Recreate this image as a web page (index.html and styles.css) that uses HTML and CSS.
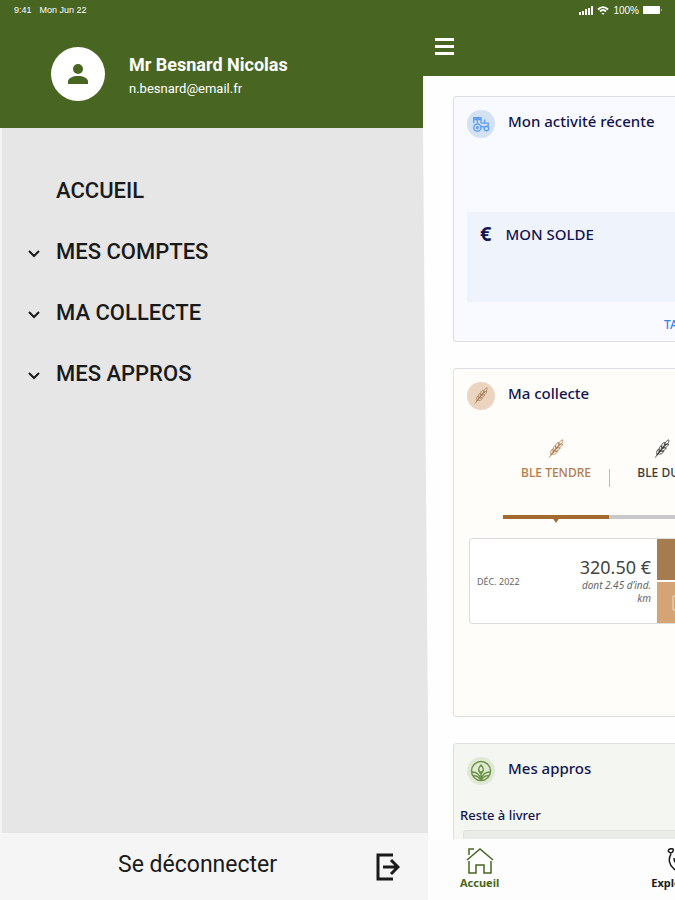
FILE: index.html
```html
<!DOCTYPE html>
<html lang="fr">
  <head>
    <meta charset="UTF-8" />
    <meta name="viewport" content="width=device-width, initial-scale=1.0" />
    <title>Accueil</title>
    <link rel="stylesheet" href="styles.css">
  </head>
  <body>
    <!-- Shared wheat ear icon -->
    <svg class="sprite" aria-hidden="true">
      <symbol id="wheat" viewBox="0 0 20 24">
        <g fill="none" stroke="currentColor" stroke-width="1" stroke-linecap="round" stroke-linejoin="round">
          <path d="M2 22L15 6" />
          <path d="M4 19c-1-4 0-6 2-7 1 3 0 5-2 7zM7 15c-1-4 0-6 2-7 1 3 0 5-2 7zM10 11c-1-4 0-6 3-7 1 3-1 5-3 7z" />
          <path d="M5 18c4 1 6-1 7-3-3-1-5 1-7 3zM8 14c4 1 6-1 7-3-3-1-5 1-7 3zM11 10c4 1 6-1 7-4-3 0-5 2-7 4z" />
          <path d="M14 7c-1-2 1-5 4-6 1 3-1 5-4 6z" />
        </g>
      </symbol>
    </svg>

    <div class="app">
      <div class="status-bar">
        <span>9:41</span>
        <span>Mon Jun 22</span>
        <div class="status-icons">
          <svg width="14" height="9" viewBox="0 0 14 9" fill="#fff">
            <path d="M0 6h2v3H0zM3 5h2v4H3zM6 3h2v6H6zM9 2h2v7H9zM12 0h2v9h-2z" />
          </svg>
          <svg width="12" height="9" viewBox="0 0 12 9" fill="none" stroke="#fff" stroke-width="2">
            <path d="M1 3.5c3-3 7-3 10 0M3 5.5c2-2 4-2 6 0" />
            <path d="M4.500 7L6 9l1.500-2z" fill="#fff" stroke="none" />
          </svg>
          <span>100%</span>
          <svg width="20" height="8" viewBox="0 0 20 8" fill="#fff">
            <rect width="17" height="8" rx="1" />
            <rect x="18" y="3" width="1" height="2" opacity="0.5" />
          </svg>
        </div>
      </div>

      <div class="layout">
        <aside class="drawer">
          <div class="profile">
            <div class="avatar">
              <svg width="20" height="20" viewBox="0 0 20 20" fill="#466622">
                <circle cx="10" cy="5" r="5" />
                <path d="M0 20v-2.500C0 14 5 12 10 12s10 2 10 5.500V20z" />
              </svg>
            </div>
            <div class="profile-text">
              <div class="profile-name">Mr Besnard Nicolas</div>
              <div class="profile-email">n.besnard@email.fr</div>
            </div>
          </div>

          <nav class="menu">
            <a href="#" class="menu-item">ACCUEIL</a>
            <a href="#" class="menu-item">
              <svg class="chevron" viewBox="0 0 12 8"><path d="M1 1l5 5 5-5" /></svg>
              MES COMPTES
            </a>
            <a href="#" class="menu-item">
              <svg class="chevron" viewBox="0 0 12 8"><path d="M1 1l5 5 5-5" /></svg>
              MA COLLECTE
            </a>
            <a href="#" class="menu-item">
              <svg class="chevron" viewBox="0 0 12 8"><path d="M1 1l5 5 5-5" /></svg>
              MES APPROS
            </a>
          </nav>

          <button class="logout">
            Se déconnecter
            <svg width="24" height="28" viewBox="0 0 24 28" fill="none" stroke="#1a1a1a" stroke-width="3">
              <path d="M17 2H2v24h15" />
              <path d="M7 14h15M15 7l7 7-7 7" />
            </svg>
          </button>
        </aside>

        <main class="main">
          <div class="topbar">
            <button class="burger" aria-label="Menu">
              <span></span>
              <span></span>
              <span></span>
            </button>
          </div>

          <div class="content">
            <section class="card activity">
              <div class="card-header">
                <div class="card-icon">
                  <svg width="18" height="18" viewBox="0 0 20 20" fill="none" stroke="#5b9cf5" stroke-width="1.500">
                    <circle cx="6" cy="14" r="4" />
                    <circle cx="6" cy="14" r="1" />
                    <circle cx="16" cy="15" r="2.500" />
                    <path d="M2 9V3h8v6M2 5h8M6 3v6M10 9h8v4M10 13h3M14 9V5" />
                  </svg>
                </div>
                <h2>Mon activité récente</h2>
              </div>
              <div class="balance">
                <span class="euro">€</span>
                <span>MON SOLDE</span>
              </div>
              <a href="#" class="card-link">TABLEAU DE BORD</a>
            </section>

            <section class="card harvest">
              <div class="card-header">
                <div class="card-icon">
                  <svg width="16" height="18"><use href="#wheat" /></svg>
                </div>
                <h2>Ma collecte</h2>
              </div>
              <div class="tabs">
                <button class="tab active">
                  <svg width="18" height="20"><use href="#wheat" /></svg>
                  BLE TENDRE
                </button>
                <button class="tab">
                  <svg width="18" height="20"><use href="#wheat" /></svg>
                  BLE DUR
                </button>
              </div>
              <div class="price-row">
                <span class="price-date">DÉC. 2022</span>
                <div class="price">
                  <div class="price-value">320.50 €</div>
                  <div class="price-note">dont 2.45 d’ind.<br />km</div>
                </div>
                <div class="price-actions">
                  <div></div>
                  <div>
                    <svg width="16" height="18" viewBox="0 0 16 18" fill="none" stroke="#f3dcc3" stroke-width="1"><path d="M1 2h14v14H1zM4 6h8M4 10h8" /></svg>
                  </div>
                </div>
              </div>
            </section>

            <section class="card supplies">
              <div class="card-header">
                <div class="card-icon">
                  <svg width="22" height="22" viewBox="0 0 22 22" fill="none" stroke="#6f9346" stroke-width="1.500">
                    <circle cx="11" cy="11" r="9.500" />
                    <path d="M11 20V11M11 14c-3-3-3-6 0-9 3 3 3 6 0 9zM11 20c-1-5-4-8-9-8M11 20c1-5 4-8 9-8M3 16c3-1 5 0 8 4M19 16c-3-1-5 0-8 4" />
                  </svg>
                </div>
                <h2>Mes appros</h2>
              </div>
              <h3>Reste à livrer</h3>
              <div class="delivery"></div>
            </section>
          </div>

          <nav class="bottom-nav">
            <a href="#" class="active">
              <svg width="28" height="26" viewBox="0 0 28 26" fill="none" stroke="currentColor" stroke-width="1.500">
                <path d="M1 12L14 1l13 11M3 7V1h5M3 13v12h7v-8h8v8h7V13" />
              </svg>
              Accueil
            </a>
            <a href="#">
              <svg width="28" height="26" viewBox="0 0 28 26" fill="none" stroke="currentColor" stroke-width="1.500">
                <path d="M13 1C10 0 7 2 9 4s5 0 4-3zM11 6c-3 5-2 11 3 15 5 3 8 1 10-4M14 10c0 4 2 6 5 7" />
              </svg>
              Explorer
            </a>
          </nav>
        </main>
      </div>
    </div>
  </body>
</html>
```
FILE: styles.css
```css
* {
  box-sizing: border-box;
}

body {
  margin: 0;
  font-family: Roboto, Arial, sans-serif;
  background-color: #fefefe;
  color: #1a1a1a;
}

a {
  color: inherit;
  text-decoration: none;
}

button {
  border: none;
  padding: 0;
  background: none;
  font-family: inherit;
  color: inherit;
  cursor: pointer;
}

h2,
h3 {
  margin: 0;
}

.sprite {
  display: none;
}

.app {
  display: flex;
  flex-direction: column;
  height: 100vh;
  overflow: hidden;
}

/* Status bar */
.status-bar {
  display: flex;
  align-items: center;
  gap: 8px;
  height: 20px;
  padding: 0 12px 0 14px;
  background-color: #486622;
  color: #fff;
  font-family: "Liberation Sans", Arial, sans-serif;
  font-size: 9px;
}

.status-icons {
  display: flex;
  align-items: center;
  gap: 4px;
  margin-left: auto;
  font-size: 10px;
}

.layout {
  display: grid;
  grid-template-columns: minmax(0, 428fr) minmax(0, 247fr);
  flex: 1;
  min-height: 0;
}

/* Drawer, its right edge leans outwards below the top bar */
.drawer {
  display: flex;
  flex-direction: column;
  background-color: #e6e6e6;
  clip-path: polygon(0 0, 100% 0, 100% 56px, calc(100% - 5px) 56px, calc(100% - 5px) 108px, 100% 80%, 100% 100%, 0 100%);
}

.profile {
  display: flex;
  align-items: center;
  gap: 24px;
  height: 108px;
  padding: 0 51px;
  background-color: #486622;
  color: #fff;
}

.avatar {
  display: flex;
  align-items: center;
  justify-content: center;
  width: 54px;
  height: 54px;
  border-radius: 50%;
  background-color: #fff;
}

.profile-text {
  padding-top: 6px;
}

.profile-name {
  font-size: 18px;
  font-weight: 700;
  line-height: 24px;
}

.profile-email {
  font-size: 13px;
  line-height: 24px;
}

.menu {
  display: flex;
  flex: 1;
  flex-direction: column;
  padding: 32px 26px;
  border-left: 2px solid #f4f4f4;
}

.menu-item {
  position: relative;
  padding-left: 28px;
  font-size: 22px;
  font-weight: 500;
  line-height: 61px;
}

.chevron {
  position: absolute;
  top: 29px;
  left: 0;
  width: 12px;
  height: 8px;
  fill: none;
  stroke: #1a1a1a;
  stroke-width: 2;
}

.logout {
  display: flex;
  align-items: center;
  justify-content: space-between;
  height: 67px;
  padding: 0 28px 4px 118px;
  background-color: #f5f5f5;
  font-size: 23px;
}

.logout svg {
  margin-top: 4px;
}

/* Main */
.main {
  display: flex;
  flex-direction: column;
  min-height: 0;
  font-family: "Noto Sans", sans-serif;
}

.topbar {
  height: 56px;
  padding: 16px 7px;
  background-color: #486622;
}

.burger {
  display: flex;
  flex-direction: column;
  gap: 4px;
  width: 19px;
  padding: 2px 0;
}

.burger span {
  width: 100%;
  height: 3px;
  background-color: #fff;
}

.content {
  display: flex;
  flex: 1;
  flex-direction: column;
  gap: 26px;
  min-height: 0;
  padding: 20px 0 0 25px;
  overflow: hidden;
}

.card {
  flex-shrink: 0;
  width: 400px;
  padding: 12px 13px;
  border: 1px solid #dcdee0;
  border-radius: 3px;
}

.card-header {
  display: flex;
  gap: 13px;
}

.card-header h2 {
  color: #14144f;
  font-size: 15px;
  font-weight: 500;
  line-height: 24px;
}

.card-icon {
  display: flex;
  align-items: center;
  justify-content: center;
  width: 28px;
  height: 28px;
  margin-top: 1px;
  border-radius: 50%;
}

.activity {
  height: 246px;
  background-color: #f8faff;
}

.activity .card-icon {
  background-color: #d2e2f3;
}

.balance {
  display: flex;
  gap: 14px;
  height: 90px;
  margin-top: 74px;
  padding: 9px 13px;
  background-color: #eff3fc;
  color: #14144f;
  font-size: 15px;
  font-weight: 500;
  line-height: 26px;
}

.euro {
  font-size: 20px;
  font-weight: 700;
}

.card-link {
  display: block;
  padding: 11px 0 0 197px;
  color: #3b82e6;
  font-size: 12px;
  font-weight: 500;
  line-height: 24px;
}

.harvest {
  height: 349px;
  background-color: #fffdf9;
}

.harvest .card-icon {
  background-color: #ecd5c0;
  color: #a9805b;
}

.tabs {
  display: flex;
  margin: 29px 0 0 36px;
}

.tab {
  position: relative;
  display: flex;
  flex-direction: column;
  align-items: center;
  gap: 4px;
  width: 106px;
  height: 80px;
  border-bottom: 4px solid #c8c8c8;
  color: #3a3a3a;
  font-size: 12px;
  font-weight: 500;
  line-height: 20px;
}

.tab.active {
  border-color: #a36a2f;
  color: #b07c50;
}

.tab.active::before {
  position: absolute;
  top: 30px;
  right: -1px;
  width: 1px;
  height: 18px;
  background-color: #bbb;
  content: "";
}

.tab.active::after {
  position: absolute;
  top: 78px;
  border: 4px solid transparent;
  border-top: 6px solid #a36a2f;
  content: "";
}

.price-row {
  display: flex;
  align-items: center;
  height: 86px;
  margin: 19px 0 0 2px;
  border: 1px solid #dcdcda;
  border-radius: 3px;
  background-color: #fff;
}

.price-date {
  width: 75px;
  padding-left: 7px;
  color: #666;
  font-size: 9px;
}

.price {
  width: 106px;
  color: #444;
  text-align: right;
}

.price-value {
  font-size: 18px;
  line-height: 24px;
}

.price-note {
  padding-bottom: 2px;
  color: #666;
  font-size: 10px;
  font-style: italic;
  line-height: 13px;
}

.price-actions {
  display: grid;
  flex: 1;
  grid-template-rows: 1fr 1fr;
  gap: 2px;
  height: 100%;
  margin-left: 6px;
}

.price-actions div {
  display: flex;
  align-items: center;
  padding-left: 15px;
  background-color: #a67b50;
}

.price-actions div:last-child {
  background-color: #d4a475;
}

.supplies {
  height: 240px;
  background-color: #f3f6f1;
}

.supplies .card-icon {
  background-color: #dfe9d6;
}

.supplies h3 {
  margin: 18px 0 0 -7px;
  color: #14144f;
  font-size: 13px;
  font-weight: 500;
  line-height: 24px;
}

.delivery {
  height: 60px;
  margin-top: 3px;
  margin-left: -4px;
  border: 1px solid #dfe1dd;
  border-radius: 3px;
  background-color: #eaece8;
}

.bottom-nav {
  display: flex;
  gap: 152px;
  height: 61px;
  padding: 9px 0 0 32px;
  overflow: hidden;
  background-color: #fdfdfd;
}

.bottom-nav a {
  display: flex;
  flex-direction: column;
  flex-shrink: 0;
  align-items: center;
  font-size: 11px;
  font-weight: 700;
  line-height: 18px;
}

.bottom-nav .active {
  color: #486622;
}
```
